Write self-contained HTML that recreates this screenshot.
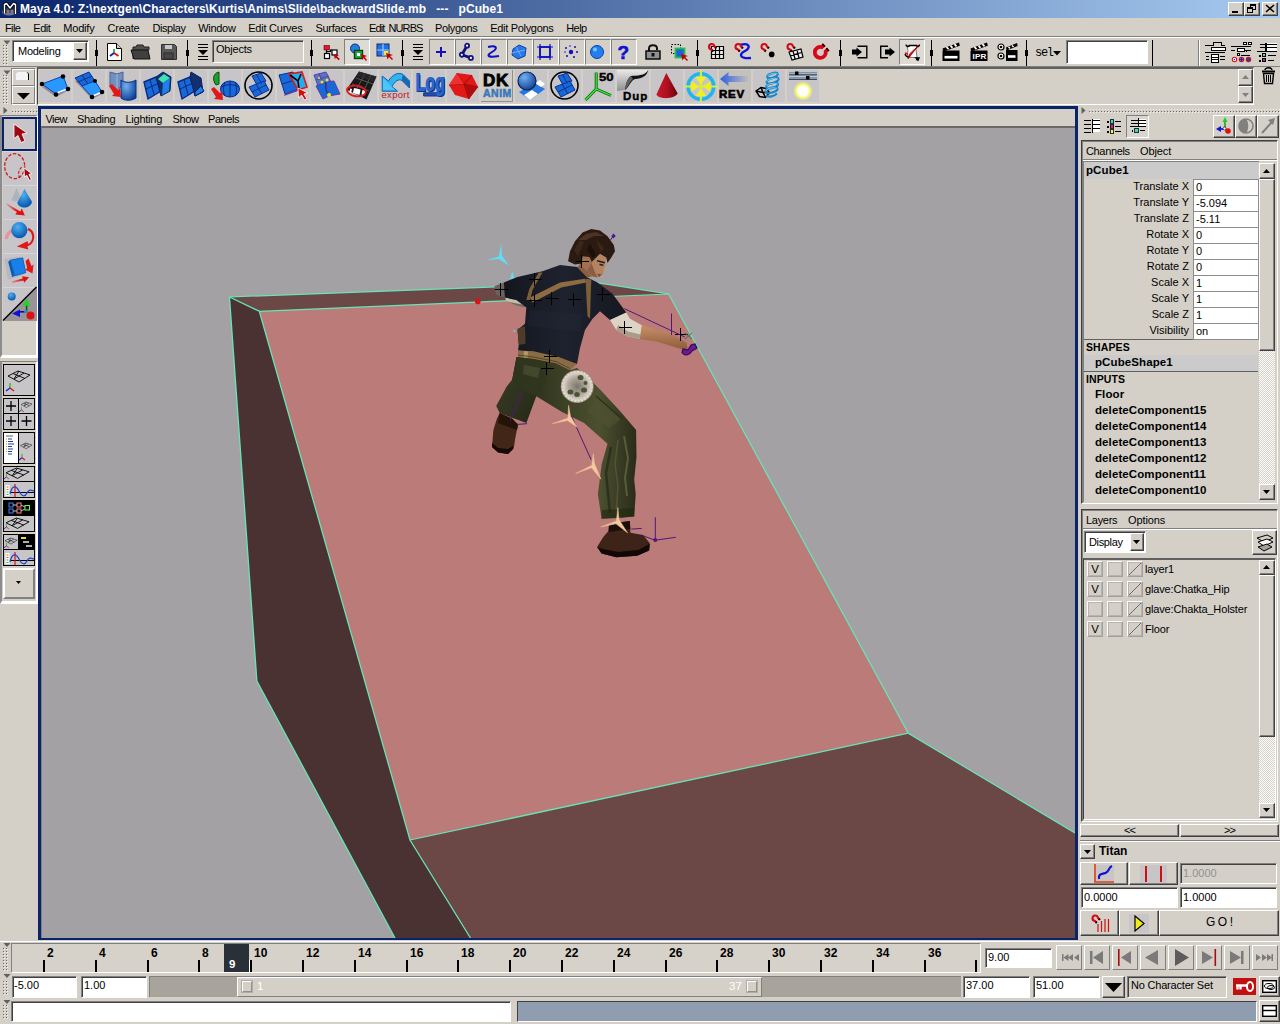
<!DOCTYPE html>
<html><head><meta charset="utf-8"><title>Maya 4.0</title>
<style>
*{box-sizing:border-box;margin:0;padding:0}
html,body{width:1280px;height:1024px;overflow:hidden;background:#d4d0c8;font-family:"Liberation Sans",sans-serif;font-size:11px;color:#000}
.a{position:absolute}
.t{position:absolute;white-space:nowrap;line-height:13px}
.tb{position:absolute;white-space:nowrap;line-height:13px;font-weight:bold}
.sunk{position:absolute;border:1px solid;border-color:#808080 #fff #fff #808080}
.sunk2{position:absolute;border:1px solid;border-color:#808080 #fff #fff #808080;box-shadow:inset 1px 1px 0 #404040,inset -1px -1px 0 #d4d0c8}
.rais{position:absolute;border:1px solid;border-color:#fff #808080 #808080 #fff}
.rais2{position:absolute;border:1px solid;border-color:#fff #404040 #404040 #fff;box-shadow:inset -1px -1px 0 #808080}
.btn{position:absolute;background:#d4d0c8;border:1px solid;border-color:#fff #404040 #404040 #fff;box-shadow:inset -1px -1px 0 #808080,inset 1px 1px 0 #d4d0c8}
.fld{position:absolute;background:#fff;border:1px solid;border-color:#808080 #fff #fff #808080;box-shadow:inset 1px 1px 0 #404040}
.hl{position:absolute;height:2px;border-top:1px solid #808080;border-bottom:1px solid #fff}
.vl{position:absolute;width:2px;border-left:1px solid #808080;border-right:1px solid #fff}
.dotsv{position:absolute;width:5px;background-image:radial-gradient(circle at 1px 1px,#6a6a6a .5px,transparent .85px);background-size:3px 3px}
svg{position:absolute;overflow:visible}
</style></head><body>
<!-- TITLE BAR -->
<div class="a" style="left:0;top:0;width:1280px;height:18px;background:linear-gradient(90deg,#0a246a,#a6caf0)"></div>
<svg style="left:1px;top:1px" width="18" height="16" viewBox="0 0 18 16">
 <ellipse cx="8" cy="11" rx="7" ry="3.5" fill="#8a8aa0" opacity=".8"/>
 <path d="M3.5 12.5V3.5L5.5 2.5L9 7L12.5 2.5L14.5 3.5V13" fill="none" stroke="#000" stroke-width="3.2" stroke-linejoin="round"/>
 <path d="M3.5 12.5V3.5L5.5 2.5L9 7L12.5 2.5L14.5 3.5V13" fill="none" stroke="#fff" stroke-width="1.4" stroke-linejoin="round"/>
 <path d="M7 12V8M11 12V8" stroke="#000" stroke-width="2.6"/><path d="M7 12V8.5M11 12V8.5" stroke="#fff" stroke-width="1"/>
</svg>
<div class="tb" id="ttl" style="left:20px;top:3px;color:#fff;font-size:12px;letter-spacing:0.05px">Maya 4.0: Z:\nextgen\Characters\Kurtis\Anims\Slide\backwardSlide.mb&nbsp;&nbsp; ---&nbsp;&nbsp; pCube1</div>
<!-- window buttons -->
<div class="btn" style="left:1228px;top:2px;width:16px;height:14px"></div>
<div class="a" style="left:1232px;top:11px;width:6px;height:2px;background:#000"></div>
<div class="btn" style="left:1244px;top:2px;width:16px;height:14px"></div>
<div class="a" style="left:1250px;top:4px;width:6px;height:6px;border:1px solid #000;border-top-width:2px"></div>
<div class="a" style="left:1247px;top:7px;width:6px;height:6px;border:1px solid #000;border-top-width:2px;background:#d4d0c8"></div>
<div class="btn" style="left:1262px;top:2px;width:16px;height:14px"></div>
<svg style="left:1266px;top:5px" width="8" height="7"><path d="M0 0L8 7M8 0L0 7" stroke="#000" stroke-width="1.6"/></svg>
<svg style="left:0;top:0" width="1280" height="1024"><defs><pattern id="dots" width="3" height="3" patternUnits="userSpaceOnUse"><rect width="1" height="1" fill="#686868"/><rect x="1" y="1" width="1" height="1" fill="#f4f2ee"/></pattern></defs><g fill="url(#dots)"><rect x="3" y="45" width="6" height="21"/><rect x="3" y="75" width="6" height="30"/><rect x="12" y="109" width="26" height="5"/><rect x="1089" y="109" width="191" height="5"/><rect x="3" y="948" width="6" height="24"/><rect x="3" y="981" width="6" height="15"/><rect x="3" y="1005" width="6" height="15"/></g></svg>
<!-- MENU BAR -->
<div class="t mi" style="left:5px;letter-spacing:-0.62px">File</div>
<div class="t mi" style="left:33.25px;letter-spacing:-0.43px">Edit</div>
<div class="t mi" style="left:63.25px;letter-spacing:-0.19px">Modify</div>
<div class="t mi" style="left:107.5px;letter-spacing:-0.17px">Create</div>
<div class="t mi" style="left:152.5px;letter-spacing:-0.44px">Display</div>
<div class="t mi" style="left:198.25px;letter-spacing:-0.31px">Window</div>
<div class="t mi" style="left:248.25px;letter-spacing:-0.24px">Edit Curves</div>
<div class="t mi" style="left:315.5px;letter-spacing:-0.3px">Surfaces</div>
<div class="t mi" style="left:369px;letter-spacing:-0.9px;word-spacing:2px">Edit NURBS</div>
<div class="t mi" style="left:435px;letter-spacing:-0.35px">Polygons</div>
<div class="t mi" style="left:490.25px;letter-spacing:-0.31px">Edit Polygons</div>
<div class="t mi" style="left:566.25px;letter-spacing:-0.59px">Help</div>
<style>.mi{top:22px;font-size:11px}</style>
<div class="hl" style="left:0;top:36px;width:1280px"></div>
<!-- STATUS LINE (row 1) -->
<svg style="left:3px;top:40px" width="9" height="66"><path d="M0.5 0.5h7l-3.5 4zM0.5 30.5h7l-3.5 4z" fill="#606060"/></svg>


<div class="fld" style="left:12px;top:40px;width:77px;height:22px"></div>
<div class="t" style="left:18px;top:45px;font-size:11px;letter-spacing:-.27px">Modeling</div>
<div class="btn" style="left:73px;top:42px;width:14px;height:18px"></div>
<svg style="left:76px;top:49px" width="8" height="4"><path d="M0 0h7l-3.5 4z"/></svg>
<style>.sep{position:absolute;top:40px;width:1px;height:26px;background:#000}.sep:after{content:"";position:absolute;left:-1px;top:10px;width:3px;height:6px;background:#000}</style>
<div class="sep" style="left:96px"></div>
<!-- new scene -->
<svg style="left:107px;top:43px" width="15" height="18" viewBox="0 0 15 18"><path d="M.5.5h9l5 5v12h-14z" fill="#fff" stroke="#000"/><path d="M9.5.5v5h5" fill="#ccc" stroke="#000"/><path d="M7 10V6" stroke="#18a030" stroke-width="1.6"/><path d="M7 10l-4 3" stroke="#1020d0" stroke-width="1.8"/><path d="M7 10l4.5 3" stroke="#e01010" stroke-width="1.8"/></svg>
<!-- folder -->
<svg style="left:130px;top:44px" width="21" height="16" viewBox="0 0 21 16"><path d="M3 15V3h3l1-2h6l1 2h5v3" fill="#505050" stroke="#202020"/><path d="M1 6h17l2 9H4z" fill="#404040" stroke="#101010"/></svg>
<!-- save -->
<svg style="left:160px;top:44px" width="17" height="16" viewBox="0 0 17 16"><path d="M1.5.5h13l2 2v13h-15z" fill="#585858" stroke="#303030"/><rect x="5" y="1" width="7" height="4" fill="#c8c8c8"/><rect x="4" y="9" width="9" height="6" fill="#484848" stroke="#2a2a2a"/></svg>
<div class="sep" style="left:187px"></div>
<svg style="left:197px;top:44px" width="12" height="16" viewBox="0 0 12 16"><path d="M1 .5h10M1 3.500h10M1 12.500h10M1 15.500h10" stroke="#000"/><path d="M1 6h10l-5 5z"/></svg>
<div class="sunk2" style="left:212px;top:40px;width:92px;height:23px;background:#d4d0c8"></div>
<div class="t" style="left:216px;top:43px;font-size:11px;letter-spacing:-.2px">Objects</div>
<div class="sep" style="left:311px"></div>
<!-- select by hierarchy -->
<svg style="left:322px;top:43px" width="18" height="18" viewBox="0 0 18 18"><path d="M4.500 7v4M4.500 8.500h4v-1.500h2" fill="none" stroke="#000" stroke-width="1.200"/><rect x="2" y="2.500" width="5.500" height="4.500" fill="#e01830" stroke="#600010" stroke-width=".6"/><rect x="2.500" y="10.500" width="5" height="5" fill="#fff" stroke="#000" stroke-width="1.200"/><rect x="10" y="7" width="5" height="5" fill="#fff" stroke="#000" stroke-width="1.200"/><path d="M11.500 11l5.500 1.500-2 .8 2.800 2.800-1.200 1.200-2.800-2.800-.8 2z" fill="#c00010"/></svg>
<!-- select by object (pressed) -->
<div class="a" style="left:344px;top:39px;width:26px;height:26px;background:#dedbd5;border:1px solid;border-color:#808080 #fff #fff #808080"></div>
<svg style="left:349px;top:43px" width="19" height="19" viewBox="0 0 19 19"><circle cx="6" cy="5.500" r="4.500" fill="#2080e0" stroke="#103070"/><rect x="5.500" y="7.500" width="8" height="8" fill="#20b040" stroke="#064010" stroke-width="1.400"/><rect x="8" y="10" width="3" height="3" fill="#fff"/><path d="M12 11l6 2-2.500 1 2.500 3-1 1-2.500-3-1.500 2z" fill="#c00000"/></svg>
<!-- component -->
<svg style="left:376px;top:43px" width="18" height="18" viewBox="0 0 18 18"><rect x="1" y="1" width="12" height="12" fill="#2070e0" stroke="#0a2a80"/><path d="M7 1v12M1 7h12" stroke="#a0c8ff" stroke-width="1.200"/><rect x="8" y="8" width="4.500" height="4.500" fill="#f0e840"/><path d="M10 10l7 2-3 1 3 3-1 1-3-3-1.500 2.500z" fill="#c00000"/></svg>
<div class="sep" style="left:402px"></div>
<svg style="left:412px;top:44px" width="12" height="16" viewBox="0 0 12 16"><path d="M1 .5h10M1 3.500h10M1 12.500h10M1 15.500h10" stroke="#000"/><path d="M1 6h10l-5 5z"/></svg>
<style>.mb{position:absolute;top:39px;width:26px;height:26px;border:1px solid;border-color:#808080 #fff #fff #808080}</style>
<div class="mb" style="left:429px"></div><div class="mb" style="left:455px"></div><div class="mb" style="left:481px"></div><div class="mb" style="left:507px"></div><div class="mb" style="left:533px"></div><div class="mb" style="left:559px"></div><div class="mb" style="left:585px"></div><div class="mb" style="left:611px"></div>
<svg style="left:429px;top:39px" width="210" height="26" viewBox="0 0 210 26">
 <path d="M7 13h10M12 8v10" stroke="#1010c0" stroke-width="2"/>
 <g transform="translate(26,0)"><path d="M12.100 6.700L6.800 15.750L15.900 18.900" fill="none" stroke="#101080" stroke-width="2.800" stroke-linejoin="round"/><circle cx="12.100" cy="6.700" r="2" fill="#fff" stroke="#101080" stroke-width="1.800"/><circle cx="6.800" cy="15.750" r="2" fill="#fff" stroke="#101080" stroke-width="1.800"/><circle cx="15.900" cy="18.900" r="2" fill="#fff" stroke="#101080" stroke-width="1.800"/></g>
 <g transform="translate(52,0)"><path d="M7 8c8-2 11 1 4 5s-3 6 7 4" fill="none" stroke="#1010c0" stroke-width="2"/></g>
 <g transform="translate(78,0)"><path d="M6 10l6-4 7 3-1 8-7 3-6-4z" fill="#2878e8" stroke="#1040a0"/><path d="M9 8l5 9M5 14l13-3" stroke="#80b8ff" stroke-width=".8"/></g>
 <g transform="translate(104,0)"><rect x="7" y="8" width="10" height="10" fill="none" stroke="#1010c0" stroke-width="1.800"/><path d="M4 8h16M4 18h16M7 5v16M17 5v16" stroke="#1010c0" stroke-width="1.200"/></g>
 <g transform="translate(130,0)" fill="#1010c0"><circle cx="12" cy="13" r="2.200"/><circle cx="7" cy="9" r="1"/><circle cx="16" cy="8" r="1"/><circle cx="18" cy="13" r="1"/><circle cx="8" cy="17" r="1"/><circle cx="15" cy="18" r="1"/><circle cx="11" cy="7" r=".8"/><circle cx="6" cy="13" r=".8"/></g>
 <g transform="translate(156,0)"><circle cx="12" cy="13" r="6.500" fill="#2080f0" stroke="#0840a0"/><circle cx="10" cy="10.500" r="2" fill="#80c0ff"/></g>
</svg>
<div class="tb" style="left:617.500px;top:43px;font-size:19px;line-height:19px;color:#1010d0;-webkit-text-stroke:.6px #1010d0">?</div>
<!-- lock -->
<svg style="left:645px;top:43px" width="16" height="17" viewBox="0 0 16 17"><path d="M4 8V5.500c0-4.500 8-4.500 8 0V7" fill="none" stroke="#101010" stroke-width="2"/><rect x="1" y="8" width="14" height="8" fill="#909090" stroke="#000" stroke-width="1.400"/><rect x="6.500" y="10" width="3" height="3.500" fill="#101010"/></svg>
<!-- highlight select -->
<svg style="left:670px;top:43px" width="19" height="19" viewBox="0 0 19 19"><rect x="1.500" y="1.500" width="9" height="9" fill="none" stroke="#000" stroke-dasharray="1.500 1.500"/><rect x="5.500" y="5.500" width="9" height="9" fill="#2060e0" stroke="#20c040" stroke-width="1.800"/><path d="M11 11l7 2-3 1 3 3-1 1-3-3-1.500 2.500z" fill="#c00000"/></svg>
<div class="sep" style="left:697px"></div>
<!-- snaps -->
<svg style="left:704px;top:40px" width="130" height="24" viewBox="0 0 130 24">
 <defs><g id="mag"><path d="M8.560 5.430L6.860 3.730A2.700 2.700 0 1 0 3.730 6.860L5.430 8.560" fill="none" stroke="#d80818" stroke-width="2.100" stroke-linejoin="round"/><path d="M9 5.870l-1.200-1.200M5.870 9l-1.200-1.200" stroke="#200000" stroke-width="2.100"/></g></defs>
 <g><path d="M7.500 6.500h12v12h-12zM11.500 6.500v12M15.500 6.500v12M7.500 10.500h12M7.500 14.500h12" fill="#ececec" stroke="#000" stroke-width="1.200"/><use href="#mag" x="3.500" y="2.500"/></g>
 <g transform="translate(27,0)"><path d="M9 5c10-3 11 3 5 6s-6 8 6 7" fill="none" stroke="#1010e0" stroke-width="2.400"/><use href="#mag" x="3" y="2.500"/></g>
 <g transform="translate(53,0)"><use href="#mag" x="3" y="2.500"/><circle cx="14.700" cy="14.400" r="2.800"/></g>
 <g transform="translate(80,0)"><path d="M5 12l12-3 2 8-11 3zM9 11l2 8M13 10l2 8M6 15.500l12-3" fill="#ececec" stroke="#000" stroke-width="1.200"/><use href="#mag" x="2" y="2.500"/></g>
 <g transform="translate(108,0)"><path d="M11.900 5.100L9.720 7.090A5.500 5.500 0 1 0 13.720 11.440L15.900 9.400" fill="none" stroke="#d80818" stroke-width="3.800"/><path d="M12.300 4.700l-1.300 1.200M16.300 9l-1.300 1.200" stroke="#200000" stroke-width="3.800"/></g>
</svg>
<div class="sep" style="left:840px"></div>
<svg style="left:852px;top:45px" width="16" height="14" viewBox="0 0 16 14"><path d="M5.500 1.200h9.300v11.600H5.500" fill="none" stroke="#000" stroke-width="1.400"/><path d="M0 4.500h4.500V2.500L10 7l-5.500 4.500V9.500H0z"/></svg>
<svg style="left:879px;top:45px" width="17" height="14" viewBox="0 0 17 14"><path d="M9 1.200H1.700v11.600H9" fill="none" stroke="#000" stroke-width="1.400"/><path d="M6 4.500h4.500V2.500L16 7l-5.500 4.500V9.500H6z"/></svg>
<div class="a" style="left:899px;top:39px;width:26px;height:26px;background:#dedbd5;border:1px solid;border-color:#808080 #fff #fff #808080"></div>
<svg style="left:903px;top:42px" width="19" height="20" viewBox="0 0 19 20"><path d="M4 3.500h11l-2 4 1 8H4l1-7z" fill="#fff" stroke="#606060" stroke-width=".8"/><path d="M3 2.500c0 2.500 3 2.500 3.500 1h7c.5 1.500 3 1.500 3-1" fill="none" stroke="#000" stroke-width="1.400"/><path d="M2 12c1 3 3 3 5 2M13 16l2 2 1-2z" fill="none" stroke="#000" stroke-width="1.400"/><circle cx="14.500" cy="17" r="1.600"/><path d="M16 3L8 13l-3 4 1.500-5z" fill="#e01010" stroke="#a00000" stroke-width=".8"/><path d="M2 11l3 1" stroke="#e01010" stroke-width="1.600"/></svg>
<div class="sep" style="left:931px"></div>
<!-- clappers -->
<svg style="left:942px;top:41px" width="76" height="21" viewBox="0 0 76 21">
 <g id="clp"><path d="M.5 7.500L17 1.500l.8 3.200L1.500 10.500z" fill="#000"/><path d="M4.500 6l2 2.200M8.500 4.600l2 2.200M12.500 3.200l2 2.200" stroke="#fff" stroke-width="1.800"/><rect x=".5" y="9.500" width="17" height="10.500" fill="#000"/></g>
 <path d="M2.500 16.200h13" stroke="#fff" stroke-width="2.600"/>
 <use href="#clp" x="28"/>
 <g transform="translate(55,0)"><circle cx="4" cy="6" r="3" fill="#fff" stroke="#000" stroke-width="1.200"/><circle cx="4" cy="6" r="1.300"/><circle cx="4" cy="15" r="3" fill="#fff" stroke="#000" stroke-width="1.200"/><circle cx="4" cy="15" r="1.300"/><path d="M9 6.500l11-4.500.7 3L9.500 9.500z"/><path d="M11.500 5.800l1.500 1.600M15 4.500l1.500 1.600" stroke="#fff" stroke-width="1.400"/><rect x="9" y="9" width="11.500" height="11"/><path d="M11 15.500h7.500" stroke="#fff" stroke-width="2.600"/></g>
</svg>
<div class="t" style="left:972.500px;top:53px;font-size:8px;line-height:8px;font-weight:bold;color:#fff;letter-spacing:.2px">IPR</div>
<div class="sep" style="left:1026px"></div>
<div class="t" style="left:1035px;top:47px;font-family:'Liberation Mono',monospace;font-size:12px;letter-spacing:-1.300px">sel</div>
<svg style="left:1053px;top:51px" width="9" height="5"><path d="M0 0h8l-4 4.500z"/></svg>
<div class="fld" style="left:1066px;top:40px;width:82px;height:24px"></div>
<div class="a" style="left:1152px;top:40px;width:1px;height:26px;background:#000"></div>
<div class="vl" style="left:1198px;top:40px;height:26px"></div>
<!-- right icons -->
<svg style="left:1205px;top:41px" width="74" height="22" viewBox="0 0 74 22" shape-rendering="crispEdges">
 <g stroke="#000" fill="none"><path d="M0 4.500h8l1-3h7l1 3h3M0 11.500h20M1 15.500h3M1 18.500h3M14.500 15.500h5.500M14.500 18.500h5.500"/><rect x="6.500" y="6.500" width="13.500" height="3" fill="#fff"/><rect x="6.500" y="13.500" width="6.500" height="7.500" fill="#fff"/><path d="M6.500 16.500h6.500M6.500 18.500h6.500" /></g>
 <g transform="translate(26,0)" stroke="#000" fill="none"><rect x="12.500" y="1.500" width="3" height="2" fill="#fff"/><rect x="17.500" y="1.500" width="3" height="2" fill="#fff"/><path d="M0 5.500h20M0 9.500h4M14 9.500h6M15 8.500v2M6 14.500h2M10 14.500h9"/><rect x="6.500" y="7.500" width="6.500" height="3" fill="#fff"/><rect x="6.500" y="12.500" width="2" height="2" fill="#fff"/></g>
 <g transform="translate(26,0)" shape-rendering="geometricPrecision"><circle cx="3.500" cy="18.500" r="2.200" fill="#fff" stroke="#d01010" stroke-width="1.100"/><circle cx="3.500" cy="18.500" r=".7" fill="#2020c0"/><circle cx="10.500" cy="18.500" r="2.200" fill="#8080e0" stroke="#d01010" stroke-width="1.100"/><path d="M10.500 16.500v4M8.500 18.500h4" stroke="#2020c0" stroke-width="1"/><circle cx="17.500" cy="18.500" r="2.200" fill="#2838c0" stroke="#d01010" stroke-width="1.100"/></g>
 <g transform="translate(52,0)" stroke="#000" fill="none"><rect x="10" y="1.500" width="10" height="8.500" fill="#fff" stroke="none"/><path d="M3 3.500h5M3 6.500h5M10 3.500h10M10 6.500h10M0 10.500h20M10.500 14.500h8.500M10.500 19.500h6.500"/><path d="M9 1.500v9" stroke-width="1.400"/><rect x="2" y="14" width="1.500" height="1.500" fill="#000" stroke="none"/><rect x="2" y="19" width="1.500" height="1.500" fill="#000" stroke="none"/><rect x="5.500" y="12.500" width="3" height="3" fill="#40e0c0"/><rect x="5.500" y="17.500" width="3" height="3" fill="#a030b0"/></g>
</svg>
<div class="hl" style="left:0;top:66px;width:1280px;border-bottom-color:#d4d0c8"></div>
<!-- SHELF -->
<div class="a" style="left:11px;top:68px;width:25px;height:37px;border:1px solid;border-color:#808080 #fff #fff #808080"></div>
<div class="a" style="left:12px;top:69px;width:23px;height:17px;border:1px solid;border-color:#fff #808080 #808080 #fff"></div>
<div class="a" style="left:16px;top:72px;width:13px;height:8px;background:#f4f4f4;border-radius:3px 3px 0 0;border-right:1px solid #000"></div>
<div class="a" style="left:12px;top:86px;width:23px;height:18px;border:1px solid;border-color:#fff #808080 #808080 #fff"></div>
<svg style="left:17px;top:93px" width="13" height="7"><path d="M0 0h13l-6.500 6.500z"/></svg>
<div class="a" style="left:37px;top:67px;width:1217px;height:38px;border:1px solid;border-color:#404040 #fff #fff #404040;border-top:2px solid #606060"></div>
<svg style="left:39px;top:70px" width="782" height="32" viewBox="0 0 782 32">
<defs>
<linearGradient id="gb" x1="0" y1="0" x2="1" y2="1"><stop offset="0" stop-color="#38a0ff"/><stop offset="1" stop-color="#1060d0"/></linearGradient>
<radialGradient id="gsph" cx=".35" cy=".3" r=".8"><stop offset="0" stop-color="#70b0f0"/><stop offset="1" stop-color="#0a3a90"/></radialGradient>
<radialGradient id="glt" cx=".5" cy=".5" r=".5"><stop offset="0" stop-color="#fff"/><stop offset=".45" stop-color="#fff"/><stop offset=".7" stop-color="#f8f870"/><stop offset="1" stop-color="#f0f060" stop-opacity="0"/></radialGradient>
<linearGradient id="grev" x1="0" y1="0" x2="1" y2="0"><stop offset="0" stop-color="#3060e0"/><stop offset="1" stop-color="#3060e0" stop-opacity="0"/></linearGradient>
<linearGradient id="gcone" x1="0" y1="0" x2="1" y2="0"><stop offset="0" stop-color="#c81828"/><stop offset=".5" stop-color="#b01020"/><stop offset="1" stop-color="#680010"/></linearGradient>
<linearGradient id="gdup" x1="0" y1="0" x2="0" y2="1"><stop offset="0" stop-color="#e8e8e8"/><stop offset="1" stop-color="#909090"/></linearGradient>
</defs>
<g id="bgs" fill="#c8c5c8">
<rect x="0" width="32" height="32"/><rect x="34" width="32" height="32"/><rect x="68" width="32" height="32"/><rect x="102" width="32" height="32"/><rect x="136" width="32" height="32"/><rect x="170" width="32" height="32"/><rect x="204" width="32" height="32"/><rect x="238" width="32" height="32"/><rect x="272" width="32" height="32"/><rect x="306" width="32" height="32"/><rect x="340" width="32" height="32"/><rect x="374" width="32" height="32"/><rect x="408" width="32" height="32"/><rect x="442" width="32" height="32"/><rect x="476" width="32" height="32"/><rect x="510" width="32" height="32"/><rect x="544" width="32" height="32"/><rect x="578" width="32" height="32"/><rect x="612" width="32" height="32"/><rect x="646" width="32" height="32"/><rect x="680" width="32" height="32"/><rect x="714" width="32" height="32"/><rect x="748" width="32" height="32"/>
</g>
<!-- 1 create polygon -->
<g><path d="M4 15l20-8 5 12-11 6z" fill="#505060" opacity=".5" transform="translate(-1,2)"/><path d="M3 14l21-8 5 13-12 5z" fill="#2898ff" stroke="#1040b0"/><path d="M18 23l10-4" stroke="#fff" stroke-width="1.600"/><circle cx="3" cy="14" r="2.300"/><circle cx="24" cy="6.500" r="2.300"/><circle cx="29" cy="19" r="2.300"/><circle cx="17" cy="24.500" r="2.300"/></g>
<!-- 2 append polygon -->
<g transform="translate(34,0)"><path d="M3 9l14-6 13 19-10 5z" fill="#505060" opacity=".5" transform="translate(-1,2)"/><path d="M2 8l14-6 6 9-13 5z" fill="#1868d8" stroke="#0a3090"/><path d="M9 5l6 9M5 12l14-6" stroke="#0a3090"/><path d="M9 16l13-5 7 11-10 5z" fill="#2898ff" stroke="#1040b0"/><path d="M20 26l9-4" stroke="#fff" stroke-width="1.600"/><circle cx="22" cy="11" r="2"/><circle cx="19" cy="27" r="2.300"/><circle cx="29" cy="22" r="2.300"/></g>
<!-- 3 -->
<g transform="translate(68,0)"><path d="M3 2l7 2 6-2v14l-6 3-7-3z" fill="#7090c0" stroke="#506090"/><path d="M10 4v15" stroke="#a0b8e0"/><path d="M14 10c4 3 10 3 15 0v18c-5 3-11 3-15 0z" fill="url(#gsph)" stroke="#0a3080"/><path d="M2 16l3-2 6 6 2-2 1 9-9-1 2-2z" fill="#e01818"/></g>
<!-- 4 extrude face -->
<g transform="translate(102,0)"><path d="M3 12l12-5 5 14-13 8z" fill="#1868d8" stroke="#0a2a80" stroke-width="1.400"/><path d="M9 9.500l4 15M5 19l13-6" stroke="#0a2a80"/><path d="M15 7l7-5 8 5-1 14-9 5z" fill="#103070" stroke="#0a2060"/><path d="M17 9l6-5 6 4-7 5z" fill="#40e0b0"/><path d="M22 13l7-5-1 13-7 4z" fill="#2080e8"/></g>
<!-- 5 extrude edge -->
<g transform="translate(136,0)"><path d="M3 12l12-5 5 14-13 8z" fill="#1868d8" stroke="#0a2a80" stroke-width="1.400"/><path d="M9 9.500l4 15M5 19l13-6" stroke="#0a2a80"/><path d="M15 7l1-5 10 6 2 14-8 4z" fill="#103070" stroke="#0a2060"/><path d="M20 22l6-6 3 5-9 5z" fill="#2080e8" stroke="#0a2060"/></g>
<!-- 6 -->
<g transform="translate(170,0)"><path d="M10 2c-6 1-7 8-3 13l3-1z" fill="#18a028" stroke="#0a5010"/><ellipse cx="21" cy="19" rx="9.500" ry="8" fill="#1868d8" stroke="#0a2a80"/><path d="M12 17c6-3 12-3 18 0M21 11v16M16 12c-2 5-2 10 0 14M26 12c2 5 2 10 0 14" fill="none" stroke="#0a2a80"/><path d="M2 19l3-2 6 6 2-2 1 9-9-1 2-2z" fill="#e01818"/></g>
<!-- 7 circle poly -->
<g transform="translate(204,0)"><circle cx="15.500" cy="15.500" r="13.500" fill="none" stroke="#000" stroke-width="1.600"/><path d="M9 6l9-3 5 8-9 4z" fill="#1868d8" stroke="#0a3090"/><path d="M6 17l15-6 5 9-14 7z" fill="#1868d8" stroke="#0a3090"/><path d="M13.500 4.500l5 9M13 14l6 10M9 22l14-7" stroke="#0a3090"/></g>
<!-- 8 split polygon -->
<g transform="translate(238,0)"><path d="M2 5l14-3 6 17-14 5z" fill="#1868d8" stroke="#0a3090"/><path d="M5 14l13-4" stroke="#0a3090"/><path d="M8 24l-1 2 14-5 1-2z" fill="#6040a0"/><path d="M12 4l13-2 5 15-9 3z" fill="#20b0f0" stroke="#e01818" stroke-width="1.600"/><path d="M13 5l8 6 3-7M21 11l1 8" fill="none" stroke="#000" stroke-width="1.600"/><path d="M21 18l10 5-4 1 3 5-2.500 1-3-5-3 3z" fill="#d01010" stroke="#fff" stroke-width=".8"/></g>
<!-- 9 merge verts -->
<g transform="translate(272,0)"><path d="M3 5l12-3 5 10-13 4z" fill="#5078c8" stroke="#6040a0"/><path d="M8 3.500l5 11M5 10l13-4" stroke="#6040a0"/><path d="M5 16l10-4 3 14-6 3z" fill="#1868d8" stroke="#6040a0"/><path d="M15 12l8-1 6 13-11 2z" fill="#1868d8" stroke="#6040a0"/><path d="M15 12c-1 6 0 10 3 14" fill="none" stroke="#0a3090"/><circle cx="11" cy="12" r="1.500" fill="#f0e020"/><circle cx="16" cy="10" r="1.500" fill="#f0e020"/><circle cx="18" cy="25" r="2" fill="#f0e020"/><circle cx="8" cy="8" r="1" fill="#f0e020"/></g>
<!-- 10 -->
<g transform="translate(306,0)"><path d="M14 1.500L31.500 6.500L21.500 29.500L1.500 19.500z" fill="#181818"/><path d="M11 8l17 6M7 14l17 7M20 3.500L9 24M26 5L16 27" stroke="#585858"/><path d="M14 1.500L31.500 6.500L29 12L11 6z" fill="#303030" opacity=".6"/><path d="M9 18l6.500 1.500-1 5.500-6.500-2z" fill="#fff"/><path d="M17.500 20l3 1-1 4.500-3-1z" fill="#fff"/><path d="M5 18.500l2 .5-1 4-1.500-.5z" fill="#fff"/><ellipse cx="11.400" cy="21" rx="9.500" ry="5.300" fill="none" stroke="#e01818" stroke-width="1.800" transform="rotate(8 11.400 21)"/></g>
<!-- 11 export -->
<g transform="translate(340,0)"><path d="M3.200 6L3.200 21.200L18.500 21.200L13 16.500C16 11 20 8.500 23 10.500L30.500 18L30.500 11L24 4.500C19 1.500 13 5 9.500 11z" fill="#30b4f0" stroke="#1060b0" stroke-width="1"/><path d="M23 10.500L30.500 18V11L24 4.500c-1 2-1 4-1 6z" fill="#1868b8"/><path d="M4 8l0 12 12 0z" fill="#60d0ff" opacity=".6"/></g>
<!-- 12 log -->
<g transform="translate(374,0)"><path d="M10.700 22.800h18.100v3.200H10.700z" fill="#2050b0" stroke="#103080"/></g>
<!-- 13 red poly -->
<g transform="translate(408,0)"><path d="M10 3l15 2 6 12-9 12-14-4-6-10z" fill="#e01818"/><path d="M10 3l7 11 8-9M17 14l-15 1M17 14l5 15M17 14l14 3" stroke="#a00808" fill="none"/><path d="M10 3l7 11-15 1z" fill="#f03030"/><path d="M17 14l5 15 9-12z" fill="#b00c0c"/></g>
<!-- 14 DK anim -->
<g transform="translate(442,0)"><rect width="32" height="32" fill="#d0ccc8"/><path d="M0 31.500h32M31.500 0v32" stroke="#909090"/></g>
<!-- 15 sphere/plane -->
<g transform="translate(476,0)"><path d="M4 22l16-9 10 6-15 11z" fill="#2878e0"/><path d="M9 25l8-5 6 4-8 6z" fill="#fff"/><path d="M20 13l5-3 5 4-4 3z" fill="#fff"/><circle cx="12" cy="11" r="9" fill="url(#gsph)" stroke="#0a2050" stroke-width="1.200"/></g>
<!-- 16 circle poly -->
<g transform="translate(510,0)"><circle cx="15.500" cy="15.500" r="13.500" fill="none" stroke="#000" stroke-width="1.600"/><path d="M9 6l9-3 5 8-9 4z" fill="#1868d8" stroke="#0a3090"/><path d="M6 17l15-6 5 9-14 7z" fill="#1868d8" stroke="#0a3090"/><path d="M13.500 4.500l5 9M13 14l6 10M9 22l14-7" stroke="#0a3090"/></g>
<!-- 17 axes 50 -->
<g transform="translate(544,0)"><path d="M13.200 2.500V19L2.500 30M13.200 19L28 25.500" fill="none" stroke="#0a700a" stroke-width="3"/><path d="M13.200 2.500V19L2.500 30M13.200 19L28 25.500" fill="none" stroke="#40f040" stroke-width="1.100"/></g>
<!-- 18 Dup -->
<g transform="translate(578,0)"><path d="M0 0h31c-1 6-6 8.500-13 9-4 1-6 8-10 11L0 21z" fill="url(#gdup)"/><path d="M31 0c-.5 6-6 8.500-13 9-4 1-6 8-10 11 1-8 3-12 6-14 6-.5 14 0 17-6z" fill="#101010"/><path d="M14 6c-3 2-5 6-6 14 3-3 5-9 8-11z" fill="#606060"/></g>
<!-- 19 cone -->
<g transform="translate(612,0)"><path d="M15.300 3L5.400 24.500c2 5 18 5 21.300-1z" fill="url(#gcone)"/></g>
<!-- 20 target -->
<g transform="translate(646,0)"><circle cx="15.900" cy="16.500" r="12.800" fill="none" stroke="#20b4f0" stroke-width="3.600"/><path d="M15.900 0v32M0 16.500h32" stroke="#d8f030" stroke-width="2"/><path d="M15.900 14.500l-5.500-7.500h11zM15.900 18.500l-5.500 7.500h11zM13.900 16.500l-7.500-5.500v11zM17.900 16.500l7.500-5.500v11z" fill="#f0f020"/></g>
<!-- 21 REV -->
<g transform="translate(680,0)"><rect width="32" height="32" fill="#c4c0bc"/><path d="M1 9l8.500-7v4h20.500v6H9.500v4z" fill="url(#grev)"/></g>
<!-- 22 spring -->
<g transform="translate(714,0)"><path d="M3 21l5-3.500 5 1 3.500 4-4 5-6-1zM8 17.500l2 5 6.500 0M10 22.500l2.500 5M3 21l7 1.500" fill="none" stroke="#000" stroke-width="1.500"/><g fill="none" stroke="#1c88c8" stroke-width="2.200"><ellipse cx="19.500" cy="5.500" rx="5.500" ry="2.200" transform="rotate(-18 19.500 5.500)"/><ellipse cx="19.500" cy="10.600" rx="6.200" ry="2.500" transform="rotate(-18 19.500 10.600)"/><ellipse cx="19" cy="15.700" rx="6.200" ry="2.500" transform="rotate(-18 19 15.700)"/><ellipse cx="18.500" cy="20.200" rx="6.200" ry="2.500" transform="rotate(-18 18.500 20.200)"/><path d="M13 25.500c3 2 8 1 11-2"/></g><g fill="none" stroke="#88dcff" stroke-width=".8"><path d="M14.500 6c2-2.500 7-3.500 10-2M13.500 11.500c2-3 8-4 11.500-2.500M13 16.500c2-3 8-4 11.500-2.500M12.500 21c2-3 8-4 11.500-2.500"/></g></g>
<!-- 23 light -->
<g transform="translate(748,0)"><path d="M2 4h28M2 8.500h28" stroke="#404850" stroke-width="3"/><path d="M2 3.500h28M2 8h28" stroke="#90b8d8" stroke-width="1.400"/><rect x="8" y="1.500" width="3.500" height="3.500"/><rect x="19" y="6" width="3.500" height="3.500"/><circle cx="16" cy="21" r="10" fill="url(#glt)"/></g>
</svg>
<div class="t" style="left:381.500px;top:88.500px;font-size:9.500px;line-height:11px;color:#c01818;letter-spacing:.3px">export</div>
<div class="tb" style="left:416px;top:70px;font-size:25px;line-height:26px;color:#2868d0;-webkit-text-stroke:2.200px #2458c0;paint-order:stroke fill;transform:scale(.62,.95);transform-origin:0 0;letter-spacing:.5px;text-shadow:1.500px 1.500px 0 #103080">Log</div>
<div class="tb" style="left:483px;top:71.500px;font-size:17px;line-height:17px;letter-spacing:.8px;font-weight:bold;-webkit-text-stroke:.9px #000">DK</div>
<div class="tb" style="left:483px;top:88px;font-size:10.500px;line-height:11px;color:#3878b8;letter-spacing:.5px;-webkit-text-stroke:.5px #3878b8">ANIM</div>
<div class="tb" style="left:599px;top:72px;font-size:10.500px;line-height:11px;transform:scaleX(1.250);transform-origin:0 0;-webkit-text-stroke:.4px #000">50</div>
<div class="tb" style="left:623px;top:89.500px;font-size:11.500px;line-height:13px;letter-spacing:1px;-webkit-text-stroke:.4px #000">Dup</div>
<div class="tb" style="left:719px;top:87.500px;font-size:11.500px;line-height:13px;letter-spacing:.7px;-webkit-text-stroke:.7px #000">REV</div>
<!-- shelf scroll + trash -->
<div class="btn" style="left:1238px;top:69px;width:15px;height:17px"></div>
<div class="btn" style="left:1238px;top:86px;width:15px;height:17px"></div>
<svg style="left:1242px;top:75px" width="8" height="24"><path d="M0 4h7l-3.500-4zM0 18h7l-3.500 4z" fill="#808080"/></svg>
<svg style="left:1261px;top:67px" width="15" height="18" viewBox="0 0 15 18"><path d="M4 3c0-3 7-3 7 0" fill="none" stroke="#000" stroke-width="1.400"/><path d="M1 3.500h13v2H1z" fill="#000"/><path d="M2.500 6.500h10l-1 10h-8z" fill="#d4d0c8" stroke="#000" stroke-width="1.400"/><path d="M5.500 8v7M7.500 8v7M9.500 8v7" stroke="#000"/></svg>
<!-- TOOLBOX -->
<svg style="left:3px;top:107px" width="8" height="8"><path d="M.5 0v7l4-3.500z" fill="#606060"/></svg>

<div class="a" style="left:0;top:115px;width:38px;height:243px;border-left:2px solid #8c8c8c;border-right:2px solid #fff;border-bottom:3px solid #fff;border-top:1px solid #808080"></div><div class="a" style="left:0;top:361px;width:38px;height:243px;border-left:2px solid #8c8c8c;border-right:2px solid #fff;border-bottom:3px solid #fff;border-top:1px solid #808080"></div>
<div class="a" style="left:3px;top:117px;width:34px;height:204px;background:#c8c5c8"></div>
<div class="a" style="left:3px;top:151px;width:34px;height:1px;background:#d8d5d8"></div><div class="a" style="left:3px;top:185px;width:34px;height:1px;background:#d8d5d8"></div><div class="a" style="left:3px;top:219px;width:34px;height:1px;background:#d8d5d8"></div><div class="a" style="left:3px;top:253px;width:34px;height:1px;background:#d8d5d8"></div><div class="a" style="left:3px;top:287px;width:34px;height:1px;background:#d8d5d8"></div>
<div class="a" style="left:2px;top:117px;width:35px;height:34px;border:2px solid #0a246a"></div>
<svg style="left:3px;top:117px" width="34" height="204" viewBox="0 0 34 204">
<defs><radialGradient id="tsph" cx=".4" cy=".3" r=".7"><stop offset="0" stop-color="#50b0f0"/><stop offset="1" stop-color="#0858b0"/></radialGradient>
<linearGradient id="tarr" x1="0" y1="0" x2="1" y2="0"><stop offset="0" stop-color="#f04040" stop-opacity=".35"/><stop offset=".6" stop-color="#e01010"/><stop offset="1" stop-color="#e01010"/></linearGradient></defs>
<!-- select arrow -->
<path d="M11 7l13 9-5 1 3 7-4 1.500-3-7-4 3z" fill="#a00810" stroke="#fff" stroke-width=".8"/>
<!-- lasso -->
<ellipse cx="11.700" cy="49.200" rx="10" ry="12.500" fill="none" stroke="#d01820" stroke-width="1.300" stroke-dasharray="3.500 1.600"/>
<path d="M17 61c-3-4-1-9 3-12" fill="none" stroke="#d01820" stroke-width="1.200" stroke-dasharray="3 1.500"/>
<path d="M20.900 50.800L21.400 59.900L23.900 58.400L26.400 63.500L28.500 62.400L25.900 57.400L29 56.900z" fill="#a00810" stroke="#fff" stroke-width=".9"/>
<!-- move -->
<path d="M3 82.500L8 70.500L13 82c-2 2.500-8 2.500-10 .5z" fill="#c4c6ca"/>
<path d="M8.500 83L13.500 71L18.500 82.500c-2 2.500-8 2.500-10 .5z" fill="#aeb2ba"/>
<path d="M14.300 85.800L21.400 72.100L29 84.800c-1 7-13 8-14.700 1z" fill="url(#tsph)"/>
<path d="M2.600 85.800c5 3 10 6 14.700 8.600l1.500-3 3.100 7.100-9.700-1 1.700-2.500C9 92.500 5 89.500 2.600 85.800z" fill="url(#tarr)"/>
<!-- rotate -->
<path d="M3.500 122c0-3.500 2-6.500 5-8" fill="none" stroke="#f08888" stroke-width="3.200" opacity=".8"/>
<path d="M24.400 113c6 2 6.500 11 1 14l-1-2.800-10.600 5.200 11.600 3-1-2.800c9-3 9-16 1-18.500z" fill="#e01818"/>
<circle cx="16.300" cy="113.200" r="8.100" fill="url(#tsph)"/>
<!-- scale -->
<path d="M1.300 142L17 139.500l3.400 18.500L5 162.700z" fill="#b0b2bc" opacity=".75"/>
<path d="M7.200 143.200L19.700 140.800L22.800 155.700L11.500 158.800z" fill="#1880e8" stroke="#0a58b0" stroke-width=".8"/>
<path d="M7.200 143.200l-2 1.500 4 15.500 2.300-1.400z" fill="#0a58b0"/>
<path d="M22.500 144l3-2.500 3 7.500 2-1.500-1 9-7.500-4 2.200-1.200z" fill="#e01818"/>
<path d="M8.700 164.200l11-2.700-.6-2.200 7 1-5 5.500-.6-2.200-11.500 2.500z" fill="url(#tarr)"/>
<!-- manip -->
<path d="M34 170v34H0z" fill="#989498"/><path d="M0 203.500L33.500 170" stroke="#000" stroke-width="1.500"/>
<circle cx="8.700" cy="179.500" r="4" fill="url(#tsph)"/>
<path d="M23.600 195V187" stroke="#106010" stroke-width="1.600"/><path d="M23.600 181.200l-4 7.500h8z" fill="#28d028"/>
<path d="M22.800 194.800h-6" stroke="#101080" stroke-width="1.600"/><path d="M9 196.500l8-4v7.500z" fill="#1010e0"/>
<circle cx="27.500" cy="198.600" r="4" fill="#e01010"/><circle cx="22.800" cy="194.500" r="1.800" fill="#2090c0"/>
</svg>
<!-- LAYOUT BUTTONS -->

<style>.lb{position:absolute;left:3px;width:32px;height:32px;border:1px solid #000;background:#c8c5c8}</style>
<div class="lb" style="top:364px"></div><div class="lb" style="top:398px"></div><div class="lb" style="top:432px"></div><div class="lb" style="top:466px"></div><div class="lb" style="top:500px"></div><div class="lb" style="top:534px"></div>
<svg style="left:3px;top:364px" width="32" height="204" viewBox="0 0 32 204">
<defs><g id="grd"><path d="M0 5l10-5 12 4-11 7z M5 2.500l12 5M11 0l-5 8M16 2l-10 6" fill="none" stroke="#000" stroke-width=".9"/></g>
<g id="ax"><path d="M4 0v5" stroke="#20c020" stroke-width="1.400"/><path d="M4 5l-4 3" stroke="#1020e0" stroke-width="1.400"/><path d="M4 5l4 3" stroke="#e01010" stroke-width="1.400"/></g>
<g id="gph"><rect x="0" y="0" width="30" height="14" fill="#c8c5c8"/><rect x="1.500" y="2" width="4" height="11" fill="#fff"/><path d="M2.500 4h2M2.500 6.500h2" stroke="#e06020"/><path d="M2.500 9h2M2.500 11.500h2" stroke="#30b030"/><path d="M6 9.500h24" stroke="#000"/><path d="M11 1v13" stroke="#e01010" stroke-width="1.200"/><path d="M6 11C8 2 12 2 15 8s6 6 8 2 4-3 7-2" fill="none" stroke="#2040d0" stroke-width="1.200"/></g></defs>
<!-- 1 persp -->
<use href="#grd" x="5" y="7"/><use href="#ax" x="3" y="19"/>
<!-- 2 four -->
<g transform="translate(0,34)"><path d="M15.500 1v30M1 15.500h30" stroke="#000"/><path d="M8 3v10M3 8h10M8 18v10M3 23h10M23.500 18v10M18.500 23h10" stroke="#000" stroke-width="1.300"/><use href="#grd" transform="translate(18,4) scale(.5)"/><use href="#ax" transform="translate(16,9) scale(.6)"/></g>
<!-- 3 outliner/persp -->
<g transform="translate(0,68)"><rect x="1" y="1" width="14" height="30" fill="#fff"/><path d="M15.500 1v30" stroke="#000"/><path d="M3 4h7" stroke="#606060"/><path d="M5 7h4M5 9.500h5M5 12h6M5 14.500h4M5 17h5M5 19.500h4M5 22h4" stroke="#2040a0"/><path d="M3 7h1M3 9.500h1M3 12h1M3 14.500h1M3 17h1M3 19.500h1" stroke="#c0a020"/><use href="#grd" transform="translate(17.500,11) scale(.52)"/><use href="#ax" transform="translate(16,22) scale(.75)"/></g>
<!-- 4 persp/graph -->
<g transform="translate(0,102)"><path d="M1 15.500h30" stroke="#000"/><use href="#grd" transform="translate(3,2) scale(1.050,.95)"/><use href="#ax" transform="translate(1,8) scale(.6)"/><use href="#gph" x="1" y="17"/></g>
<!-- 5 hypergraph/persp -->
<g transform="translate(0,136)"><rect x="1" y="1" width="30" height="14" fill="#000"/><path d="M1 15.500h30" stroke="#000"/><g fill="none" stroke-width="1"><rect x="6" y="3" width="4" height="4" stroke="#4080ff"/><rect x="6" y="9" width="4" height="4" stroke="#4080ff"/><rect x="14" y="3" width="4" height="4" stroke="#ff8080"/><rect x="14" y="9" width="4" height="4" stroke="#ff8080"/><rect x="22" y="5.500" width="4.500" height="4.500" stroke="#60ff60"/><path d="M10 5h4M10 11h4M18 5l4 2M18 11l4-2" stroke="#c0c0c0"/></g><use href="#grd" transform="translate(3,18) scale(1.050,.95)"/><use href="#ax" transform="translate(1,24) scale(.6)"/></g>
<!-- 6 persp/dope/graph -->
<g transform="translate(0,170)"><path d="M1 15.500h30M15.500 1v14" stroke="#000"/><use href="#grd" transform="translate(2,4) scale(.55)"/><use href="#ax" transform="translate(1,9) scale(.6)"/><rect x="16" y="1" width="15" height="14" fill="#000"/><path d="M18 4h5" stroke="#f0e020" stroke-width="2"/><path d="M20 8h6M23 12h6" stroke="#b0b0b0" stroke-width="2"/><use href="#gph" x="1" y="17"/></g>
</svg>
<div class="a" style="left:3px;top:568px;width:32px;height:31px;border:2px solid;border-color:#fff #808080 #808080 #fff"></div>
<svg style="left:16px;top:581px" width="6" height="4"><path d="M0 0h5l-2.500 3z"/></svg>
<!-- VIEWPORT FRAME -->
<div class="a" style="left:38px;top:106px;width:1040px;height:835px;border:3px solid #0a246a;background:#d4d0c8"></div>
<div class="t vm" style="left:45.500px;letter-spacing:-.55px">View</div><div class="t vm" style="left:77px;letter-spacing:-.3px">Shading</div><div class="t vm" style="left:125.500px;letter-spacing:-.25px">Lighting</div><div class="t vm" style="left:172.500px;letter-spacing:-.35px">Show</div><div class="t vm" style="left:208px;letter-spacing:-.45px">Panels</div>
<style>.vm{top:113px;font-size:11px}</style>
<div class="a" style="left:41px;top:126px;width:1034px;height:812px;background:#a3a1a4;border-top:2px solid #6c6868;border-left:1px solid #808080"></div>
<svg style="left:41px;top:128px" width="1034" height="810" viewBox="41 128 1034 810">
<defs>
<clipPath id="vp"><rect x="41" y="128" width="1034" height="810"/></clipPath>
<linearGradient id="pants" x1="0" y1="0" x2="1" y2="0"><stop offset="0" stop-color="#282a18"/><stop offset=".45" stop-color="#3e4226"/><stop offset=".7" stop-color="#4c5030"/><stop offset="1" stop-color="#2a2c1a"/></linearGradient>
<linearGradient id="pants2" x1="0" y1="0" x2="1" y2="1"><stop offset="0" stop-color="#3c4026"/><stop offset="1" stop-color="#242818"/></linearGradient>
<linearGradient id="shirt" x1="0" y1="0" x2="1" y2="0"><stop offset="0" stop-color="#14161e"/><stop offset=".5" stop-color="#1e222e"/><stop offset="1" stop-color="#151820"/></linearGradient>
<linearGradient id="arm" x1="0" y1="0" x2="0" y2="1"><stop offset="0" stop-color="#c89068"/><stop offset="1" stop-color="#8a5a38"/></linearGradient>
<radialGradient id="skull" cx=".5" cy=".5" r=".5"><stop offset="0" stop-color="#7c766a"/><stop offset=".55" stop-color="#b0a89c"/><stop offset=".85" stop-color="#dcd4c8"/><stop offset="1" stop-color="#98897a"/></radialGradient>
<g id="star"><path d="M-1 0L2 -12L3.500 -1L13 7.500L1 3.500L-12 5.500z"/></g>
</defs>
<g clip-path="url(#vp)" shape-rendering="crispEdges">
<!-- ramp geometry -->
<path d="M229.500 297L259.300 311.300L410 840L470.500 938L395 938L256.900 681z" fill="#4a3232"/>
<path d="M229.500 297L598 283L668.600 294L259.300 311.300z" fill="#6b4746"/>
<path d="M259.300 311.300L668.600 294L908.300 733.200L410 840z" fill="#bb7b79"/>
<path d="M410 840L908.300 733.200L1075 833L1075 938L470.500 938z" fill="#6b4746"/>
<g fill="none" stroke="#66e6b8" stroke-width="1.250" shape-rendering="geometricPrecision">
<path d="M229.500 297L598 283L668.600 294L908.300 733.200L1075 833"/>
<path d="M229.500 297L256.900 681L395 938"/>
<path d="M229.500 297L259.300 311.300L410 840L470.500 938"/>
<path d="M259.300 311.300L668.600 294"/>
<path d="M410 840L908.300 733.200"/>
</g>
</g>
<g clip-path="url(#vp)">
<!-- cyan locators -->
<g fill="#60dcf4"><path d="M498.800 256.300L501.300 243L502 255.500L509 265.500L498.500 259L486 260.500z"/><path d="M512.500 271l2 8-4.500 0z"/><path d="M513 329.500l3 1.500-2 1z"/></g>
<circle cx="477.800" cy="301.400" r="2.800" fill="#e01018"/>
<!-- CHARACTER -->
<!-- back (left) leg -->
<path d="M516.600 357L512.300 379.400L506.700 386.400L496.200 406.100L499.700 413.100L526.400 423L536.300 396.300L528 372z" fill="url(#pants2)"/>
<path d="M499.700 413.100L512.300 418.800L518 424.400L515.200 438.500L513.800 448.300L508.100 453.900L498.300 452.500L492 446.900L493.400 430L496.900 418.800z" fill="#422618"/>
<path d="M499.700 413.100L512.300 418.800L518 424.400L517 430L498 423z" fill="#241408"/>
<path d="M492 443l6 5 10 1 5-3 0 3-5 5-10-1.500-6-5.500z" fill="#140a06"/>
<!-- left hand / forearm -->
<path d="M494.400 286.300L503.800 282.500L505 297.500L496.300 295z" fill="#6a625c"/>
<path d="M505 297.500L516.300 300L526.300 301.300L525.600 307.500L517.500 306.300L506.300 301.300z" fill="#c4bcae"/>
<path d="M506.300 301.300L517.500 306.300L525.600 307.500L525.900 305L517 303.500z" fill="#7a6c5c"/>
<!-- torso -->
<path d="M560 265L577.500 266.900L587.500 277.500L597.500 282.500L612.500 293.800L626.300 312.500L610 320L600 311.300L592.500 318.800L585 330L580 348L577 364L556 357.500L533.400 352L518 350.500L518.800 345L517.500 330L525 323.800L526.300 307.500L516.300 300L505 297.500L503.800 282.500L517.500 276.900L542.500 271.300z" fill="url(#shirt)"/>
<path d="M530 310l52 4-2 18-52-6z" fill="#262c3a" opacity=".3"/>
<!-- straps -->
<path d="M538.800 272.500L542.500 272.500L532.500 290L530 300L526.300 300L529.400 288.800z" fill="#7c5e38"/>
<path d="M530 297.500L560 282.500L585 278.800L586.300 282.500L561.300 287.500L532.500 302.500z" fill="#8c6c40"/>
<path d="M585.600 278.800L591.300 279.400L590.600 300L590 318.800L587.500 316.300L586.300 295z" fill="#7c5e38"/>
<!-- pouch -->
<path d="M517.500 328.800L525 326.300L525.600 343.800L518.800 345z" fill="#4c3c28"/>
<!-- neck / ear / face / hair -->
<path d="M580 263.800L586.300 270L592.500 276.300L587.500 277.500L577.500 267.500z" fill="#8a5c40"/>
<path d="M591.300 262.500L596.300 257.500L600 253.800L606.300 257.500L605 267.500L603.100 273.800L597.500 277.500L592.500 276.300L586.300 270z" fill="#b48462"/>
<path d="M591.300 262.500L586.300 270L592.500 276.300L597.500 277.500L594 270z" fill="#8a5c40"/>
<path d="M597 260l8 2-.3 1.600-7.700-2z" fill="#2a1810"/><path d="M599.500 263.500l4 1-.3 1.500-3.700-.8z" fill="#30201a"/><path d="M604.500 266l1.500 5-2.500 1z" fill="#c89874"/><path d="M597 273.500l5 1-3 2.500z" fill="#7a4c34"/>
<path d="M568.100 261.300L570 251.300L575 241.300L582.500 232.500L591.300 229L600 230.600L607.500 236.300L613.800 245L615 251.300L611.300 257.500L607.500 263.100L606.300 257.500L600 253.800L596.300 257.500L591.300 262.500L588.800 257.500L586.300 267.500L580 263.800L575 264.400z" fill="#2a1a12"/>
<path d="M582.500 256.300L589.500 257L592 262.500L587 271L581.300 266.300z" fill="#a07050"/>
<path d="M578 240l8-6 10-2 8 4-10 0-8 4z" fill="#4e3222"/>
<path d="M596 240l8 8-3 4z" fill="#3e281a"/><path d="M574 250l6-10 4 2-6 14z" fill="#3c2618"/><path d="M590 244l6 10-3 4-6-8z" fill="#1c100a"/>
<!-- right arm -->
<path d="M610 320L626.300 312.500L630 318.800L641.900 325.200L639.900 338.900L627.500 336.300L616.300 330z" fill="#dcd4c4"/>
<path d="M616.300 330L627.500 336.300L639.900 338.900L640.500 334.500L628 331.500L618 325z" fill="#a89c88"/>
<path d="M641.900 325.200L673.100 335L686.800 342.800L687.800 350.600L677 347.700L657.500 341.800L639.900 338.900z" fill="url(#arm)"/>
<!-- glaive in hand -->
<path d="M682 352.500c3 4.500 8 2 10-1.500l5-3-2-4-4 1-3 5-5-1z" fill="#6a1a92" stroke="#3c0858" stroke-width="1.200"/>
<!-- belt -->
<path d="M518 350.500L533.400 351.300L558.800 356.900L577 363.900L570 370.200L556 363.200L533.400 359L518 356.900z" fill="#8a6c44"/>
<path d="M524 351l4 .5-.5 6.500-4-.5z" fill="#b09a68"/>
<path d="M518 355l15.400 2 22.600 4.500 14 7" fill="none" stroke="#5a4428" stroke-width="1"/>
<!-- front (right) leg -->
<path d="M516.600 356.900L533.400 359L556 363.200L570 370.200L577 368.100L591.100 380.800L601 390.600L620.600 411.700L636.100 430L636.500 457.100L634.200 479.400L635.700 494.200L634.200 516.500L619.400 518L601.600 518.700L597.900 494.200L601.600 464.500L607.500 443.800L584.100 423L561.600 411.700L536.300 396.300L524 390L512.300 379.400z" fill="url(#pants)"/>
<path d="M516.600 356.900L533.400 359L548 362L546 382L536.300 396.300L524 390L512.300 379.400z" fill="#30361f" opacity=".85"/>
<path d="M524 365l16 3-2 10-15-4z" fill="#484c2e" opacity=".8"/>
<path d="M597 397l24 22-12 9-22-16z" fill="#4e5232" opacity=".75"/>
<path d="M596 396l26 23" stroke="#262c18" stroke-width="1.500" fill="none" opacity=".8"/>
<path d="M624 436l4 22-3 20 2 18" fill="none" stroke="#66693f" stroke-width="2" opacity=".75"/>
<path d="M618 440l-3 24 3 22-2 28" fill="none" stroke="#5a5e38" stroke-width="1.500" opacity=".7"/>
<path d="M611 447l-5 26 4 40" fill="none" stroke="#222816" stroke-width="2.500" opacity=".7"/>
<path d="M601.600 510L634.200 508L634.200 516.500L601.600 518.700z" fill="#20260f" opacity=".6"/>
<!-- right boot -->
<path d="M609 523.900L629.800 521L630.500 532.800L643.100 535.100L649.800 543.200L649.100 550.600L637.200 555.800L616.400 557.300L601.600 553.600L597.100 546.900L603.100 537.300L608.200 531.300z" fill="#3e2418"/>
<path d="M609 523.900L629.800 521L630.300 529L609 532z" fill="#1c0e08"/>
<path d="M597.100 546.900L603 549L618 552L638 550L649.800 544L649.100 550.600L637.200 555.800L616.400 557.300L601.600 553.600z" fill="#120806"/>
<!-- skull emblem -->
<circle cx="577.200" cy="386.400" r="16.500" fill="url(#skull)"/>
<circle cx="577.200" cy="386.400" r="15" fill="none" stroke="#f0ece4" stroke-width="1.200" stroke-dasharray="2 1.500" opacity=".8"/>
<g fill="#4c5238"><ellipse cx="580.500" cy="377.500" rx="3" ry="2.600"/><ellipse cx="570.500" cy="392" rx="3" ry="2.500"/><ellipse cx="577" cy="394.500" rx="2.800" ry="2.500"/><ellipse cx="584" cy="390" rx="3" ry="2.600"/><ellipse cx="585.500" cy="383" rx="2" ry="2"/></g>
<!-- rig markers -->
<g stroke="#000" stroke-width="1" fill="none" shape-rendering="crispEdges">
<path d="M494.5 289.5h13M500.5 283v13M528.5 279.5h13M534.5 273v13M528.5 300.5h13M534.5 294v13M545.5 298.5h13M551.5 292v13M567.5 299.5h13M573.5 293v13M575.5 261.5h13M581.5 255v13M596.5 294.5h13M602.5 288v13M618.5 327.5h13M624.5 321v13M674.5 334.5h13M680.5 328v13M543.5 356.5h13M549.5 350v13M540.5 368.5h13M546.5 362v13"/>
</g>
<g stroke="#501878" stroke-width="1" fill="none">
<path d="M624.300 308.600L684.800 337M671.500 313.500V335M610 240.600l3.100-4.300"/>
<path d="M571.400 416L591.100 459.600M522.200 392L510.200 420.200M517.300 424.400L527.100 423.700"/>
<path d="M655.300 517.200V540.200L675.800 537.300M631.300 529.100L641.700 528.400M643.100 535.800L655 540.200"/>
</g>
<path d="M613.500 233.500l2.200 2.500-2.200 2.500-2.200-2.500z" fill="#4818a0"/>
<circle cx="655.300" cy="540" r="2" fill="#501878"/>
<path d="M685 333l7 6M692 333l-7 6" stroke="#208060" stroke-width="1"/>
<g fill="#f4c8a0" stroke="#e8b890" stroke-width=".6">
<path d="M567.900 418.100L568.600 405.400L570.500 416.500L577 427.200L567.500 420.500L552.400 423.700z"/>
<path d="M591.800 465.200L593.200 453.900L594.500 463.500L601 479.200L591.500 467.800L575.600 473.600z"/>
<path d="M616.400 521L617.900 507.600L619 519.500L627.500 532.800L616 523.800L600.800 526.900z"/>
</g>
</g>
</svg>
<!-- RIGHT PANEL -->
<svg style="left:1081px;top:107px" width="8" height="8"><path d="M.5 0v7l4-3.500z" fill="#606060"/></svg>

<!-- channel box icons -->
<div class="a" style="left:1126px;top:115px;width:23px;height:23px;background:#d8d5ce;border:1px solid;border-color:#808080 #fff #fff #808080"></div>
<svg style="left:1084px;top:117px" width="66" height="20" viewBox="0 0 66 20" shape-rendering="crispEdges">
<rect x="9" y="2" width="7" height="13" fill="#fff"/><path d="M0 3.500h7M0 7.500h7M0 11.500h7M0 15.500h7M9 3.500h7M9 7.500h7M9 11.500h7" stroke="#000" fill="none"/><path d="M8.500 2v14" stroke="#000" stroke-width="1.400"/>
<g transform="translate(23,0)"><path d="M8 4.500h6M8 9.500h6M8 14.500h6" stroke="#000"/><rect x="0" y="4" width="1.500" height="1.500"/><rect x="0" y="9" width="1.500" height="1.500"/><rect x="0" y="14" width="1.500" height="1.500"/><rect x="3" y="2.500" width="3.500" height="3.500" fill="#30e0c0" stroke="#000" stroke-width=".8"/><rect x="3" y="7.500" width="3.500" height="3.500" fill="#c03090" stroke="#000" stroke-width=".8"/><rect x="3" y="12.500" width="3.500" height="3.500" fill="#f0f060" stroke="#000" stroke-width=".8"/></g>
<g transform="translate(46,0)"><rect x="9" y="2" width="7" height="7" fill="#fff"/><path d="M1 3.500h7M1 6.500h7M9 3.500h7M9 6.500h7M0 9.500h16M10 13.500h5" stroke="#000"/><path d="M8.500 1v9" stroke="#000" stroke-width="1.400"/><rect x="1.500" y="13" width="1.500" height="1.500"/><rect x="4.500" y="11.500" width="3.500" height="3.500" fill="#30e0c0" stroke="#000" stroke-width=".8"/></g>
</svg>
<div class="btn" style="left:1213px;top:115px;width:22px;height:23px"></div>
<div class="btn" style="left:1235px;top:115px;width:22px;height:23px"></div>
<div class="btn" style="left:1257px;top:115px;width:22px;height:23px"></div>
<svg style="left:1214px;top:116px" width="64" height="20" viewBox="0 0 64 20"><path d="M11 13V5" stroke="#20a020" stroke-width="1.600"/><path d="M11 1l-2.500 5h5z" fill="#20d020"/><path d="M11 13H5" stroke="#1010c0" stroke-width="1.600"/><path d="M2 13l5-3v6z" fill="#1010e0"/><circle cx="14" cy="15" r="2.800" fill="#e01010"/><circle cx="10.500" cy="12.500" r="1.500" fill="#fff" stroke="#000" stroke-width=".6"/>
<g transform="translate(22,0)"><circle cx="10" cy="10" r="7" fill="none" stroke="#808080" stroke-width="1.600"/><path d="M10 3a7 7 0 0 0 0 14c3-3 3-11 0-14z" fill="#808080"/></g>
<g transform="translate(44,0)"><path d="M4 17L15 5" stroke="#808080" stroke-width="2"/><path d="M17 2l-7 2 5 5z" fill="#808080"/></g></svg>
<!-- channel box frame -->
<div class="a" style="left:1081px;top:140px;width:197px;height:364px;border:1px solid;border-color:#404040 #fff #fff #404040;box-shadow:inset 1px 1px 0 #808080"></div>
<div class="t" style="left:1086px;top:145px;font-size:11px;letter-spacing:-.35px">Channels</div><div class="t" style="left:1140px;top:145px;font-size:11px;letter-spacing:-.1px">Object</div>
<div class="hl" style="left:1083px;top:159px;width:194px"></div>
<div class="a" style="left:1084px;top:162px;width:174px;height:17px;background:#cbcbcb"></div>
<div class="a" style="left:1084px;top:355px;width:174px;height:16px;background:#cbcbcb"></div>
<div class="a" style="left:1084px;top:339px;width:174px;height:1px;background:#606060"></div>
<div class="a" style="left:1084px;top:371px;width:174px;height:1px;background:#606060"></div>
<div class="a" style="left:1083px;top:161px;width:1px;height:341px;background:#808080"></div>
<div class="a" style="left:1084px;top:161px;width:175px;height:1px;background:#808080"></div>
<div class="tb cb" style="left:1086px;top:164px">pCube1</div>
<style>.cb{font-size:11.500px;letter-spacing:.1px}.cl{position:absolute;right:91px;white-space:nowrap;line-height:13px;font-size:11px}.cf{position:absolute;left:1193px;width:66px;height:17px;background:#fff;border:1px solid #8c8c8c;font-size:11px;line-height:14px;padding-left:2px}</style>
<div class="cl" style="top:180px">Translate X</div><div class="cl" style="top:196px">Translate Y</div><div class="cl" style="top:212px">Translate Z</div><div class="cl" style="top:228px">Rotate X</div><div class="cl" style="top:244px">Rotate Y</div><div class="cl" style="top:260px">Rotate Z</div><div class="cl" style="top:276px">Scale X</div><div class="cl" style="top:292px">Scale Y</div><div class="cl" style="top:308px">Scale Z</div><div class="cl" style="top:324px">Visibility</div>
<div class="cf" style="top:179px">0</div><div class="cf" style="top:195px">-5.094</div><div class="cf" style="top:211px">-5.11</div><div class="cf" style="top:227px">0</div><div class="cf" style="top:243px">0</div><div class="cf" style="top:259px">0</div><div class="cf" style="top:275px">1</div><div class="cf" style="top:291px">1</div><div class="cf" style="top:307px">1</div><div class="cf" style="top:323px">on</div>
<div class="tb cb" style="left:1086px;top:341px;font-size:10.500px">SHAPES</div>
<div class="tb cb" style="left:1095px;top:356px">pCubeShape1</div>
<div class="tb cb" style="left:1086px;top:373px;font-size:10.500px">INPUTS</div>
<div class="tb cb" style="left:1095px;top:388px">Floor</div>
<div class="tb cb" style="left:1095px;top:404px">deleteComponent15</div><div class="tb cb" style="left:1095px;top:420px">deleteComponent14</div><div class="tb cb" style="left:1095px;top:436px">deleteComponent13</div><div class="tb cb" style="left:1095px;top:452px">deleteComponent12</div><div class="tb cb" style="left:1095px;top:468px">deleteComponent11</div><div class="tb cb" style="left:1095px;top:484px">deleteComponent10</div>
<!-- scrollbar -->
<style>.trk{position:absolute;background:#eae8e4;background-image:conic-gradient(#d4d0c8 25%,#fff 0 50%,#d4d0c8 0 75%,#fff 0);background-size:2px 2px}</style>
<div class="trk" style="left:1259px;top:163px;width:16px;height:337px"></div>
<div class="btn" style="left:1259px;top:163px;width:16px;height:16px"></div>
<div class="btn" style="left:1259px;top:179px;width:16px;height:172px"></div>
<div class="btn" style="left:1259px;top:484px;width:16px;height:16px"></div>
<svg style="left:1263px;top:169px" width="8" height="325"><path d="M0 4h7l-3.500-4z"/><path d="M0 321h7l-3.500 4z"/></svg>
<!-- LAYER EDITOR -->
<div class="a" style="left:1081px;top:509px;width:197px;height:313px;border:1px solid;border-color:#404040 #fff #fff #404040;box-shadow:inset 1px 1px 0 #808080"></div>
<div class="t" style="left:1086px;top:514px;font-size:11px;letter-spacing:-.3px">Layers</div><div class="t" style="left:1128px;top:514px;font-size:11px;letter-spacing:-.1px">Options</div>
<div class="hl" style="left:1083px;top:528px;width:194px"></div>
<div class="fld" style="left:1084px;top:531px;width:62px;height:22px"></div>
<div class="t" style="left:1089px;top:536px;font-size:11px;letter-spacing:-.35px">Display</div>
<div class="btn" style="left:1130px;top:533px;width:14px;height:18px"></div>
<svg style="left:1133px;top:540px" width="8" height="4"><path d="M0 0h7l-3.500 4z"/></svg>
<div class="btn" style="left:1252px;top:530px;width:25px;height:25px"></div>
<svg style="left:1255px;top:533px" width="20" height="20" viewBox="0 0 20 20"><path d="M2 5l10-3 6 3-9 4z" fill="#d4d0c8" stroke="#000"/><path d="M3 9l9-3 6 3-9 4z" fill="#fff" stroke="#000"/><path d="M3 14l9-3 5 3-8 4z" fill="#a0a098" stroke="#000"/></svg>
<div class="a" style="left:1083px;top:558px;width:193px;height:262px;border:1px solid;border-color:#404040 #fff #fff #404040;border-top:2px solid #606060"></div>
<style>.lx{position:absolute;width:16px;height:16px;border:1px solid;border-color:#fff #a0a0a0 #a0a0a0 #fff;outline:1px solid #b8b4ac;outline-offset:-2px;font-size:11.500px;line-height:14px;text-align:center}.ln{position:absolute;left:1145px;white-space:nowrap;font-size:11px;line-height:13px;letter-spacing:-.15px}</style>
<div class="lx" style="left:1087px;top:561px">V</div><div class="lx" style="left:1107px;top:561px"></div><div class="lx" style="left:1127px;top:561px"></div>
<div class="lx" style="left:1087px;top:581px">V</div><div class="lx" style="left:1107px;top:581px"></div><div class="lx" style="left:1127px;top:581px"></div>
<div class="lx" style="left:1087px;top:601px"></div><div class="lx" style="left:1107px;top:601px"></div><div class="lx" style="left:1127px;top:601px"></div>
<div class="lx" style="left:1087px;top:621px">V</div><div class="lx" style="left:1107px;top:621px"></div><div class="lx" style="left:1127px;top:621px"></div>
<svg style="left:1127px;top:561px" width="16" height="76"><path d="M2 14L14 2M2 34L14 22M2 54L14 42M2 74L14 62" stroke="#606060" stroke-width=".9"/></svg>
<div class="ln" style="top:563px">layer1</div><div class="ln" style="top:583px">glave:Chatka_Hip</div><div class="ln" style="top:603px">glave:Chakta_Holster</div><div class="ln" style="top:623px">Floor</div>
<div class="trk" style="left:1259px;top:560px;width:16px;height:258px"></div>
<div class="btn" style="left:1259px;top:560px;width:16px;height:15px"></div>
<div class="btn" style="left:1259px;top:575px;width:16px;height:162px"></div>
<div class="btn" style="left:1259px;top:803px;width:16px;height:15px"></div>
<svg style="left:1263px;top:565px" width="8" height="248"><path d="M0 4h7l-3.500-4z"/><path d="M0 243h7l-3.500 4z"/></svg>
<div class="btn" style="left:1080px;top:824px;width:99px;height:13px"></div>
<div class="btn" style="left:1180px;top:824px;width:99px;height:13px"></div>
<div class="t" style="left:1124px;top:824px;font-size:11px;line-height:12px;letter-spacing:-1px">&lt;&lt;</div>
<div class="t" style="left:1224px;top:824px;font-size:11px;line-height:12px;letter-spacing:-1px">&gt;&gt;</div>
<div class="hl" style="left:1080px;top:840px;width:200px"></div>
<!-- TITAN -->
<div class="btn" style="left:1080px;top:844px;width:15px;height:15px"></div>
<svg style="left:1084px;top:850px" width="8" height="4"><path d="M0 0h7l-3.500 4z"/></svg>
<div class="tb" style="left:1099px;top:845px;font-size:12px">Titan</div>
<div class="btn" style="left:1080px;top:862px;width:48px;height:23px"></div>
<div class="btn" style="left:1129px;top:862px;width:49px;height:23px"></div>
<div class="a" style="left:1094px;top:865px;width:20px;height:18px;background:#c8c5c8"></div><svg style="left:1093px;top:864px" width="22" height="20" viewBox="0 0 22 20"><path d="M2 0v18h19" fill="none" stroke="#e04010" stroke-width="1.600"/><path d="M6 15c-1-7 5-4 8-7s2-5 5-6" fill="none" stroke="#1010d0" stroke-width="2.200"/></svg>
<div class="a" style="left:1140px;top:865px;width:27px;height:18px;background:#c8c5c8"></div>
<div class="a" style="left:1145px;top:866px;width:2px;height:16px;background:#d01010"></div><div class="a" style="left:1160px;top:866px;width:2px;height:16px;background:#d01010"></div>
<div class="sunk2" style="left:1180px;top:863px;width:97px;height:21px;background:#d4d0c8"></div>
<div class="t" style="left:1183px;top:867px;font-size:11px;color:#909090">1.0000</div>
<div class="fld" style="left:1081px;top:887px;width:97px;height:21px"></div><div class="t" style="left:1084px;top:891px;font-size:11px">0.0000</div>
<div class="fld" style="left:1180px;top:887px;width:97px;height:21px"></div><div class="t" style="left:1183px;top:891px;font-size:11px">1.0000</div>
<div class="btn" style="left:1080px;top:910px;width:39px;height:26px"></div>
<div class="btn" style="left:1119px;top:910px;width:40px;height:26px"></div>
<div class="btn" style="left:1159px;top:910px;width:120px;height:26px"></div>
<svg style="left:1091px;top:914px" width="20" height="19" viewBox="0 0 20 19"><path d="M7 10v8M10.500 7v11M14 5v13M17.500 5v13" stroke="#d01010" stroke-width="1.200"/><path d="M8.560 5.430L6.860 3.730A2.700 2.700 0 1 0 3.730 6.860L5.430 8.560" fill="none" stroke="#d80818" stroke-width="2.100" stroke-linejoin="round"/><path d="M9 5.870l-1.200-1.200M5.870 9l-1.200-1.200" stroke="#200000" stroke-width="2.100"/></svg>
<div class="a" style="left:1129px;top:914px;width:20px;height:19px;background:#c8c5c8"></div>
<svg style="left:1134px;top:915px" width="12" height="17"><path d="M1 1l9 7.500-9 7.500z" fill="#f0f010" stroke="#000" stroke-width="1.200"/></svg>
<div class="t" style="left:1206px;top:916px;font-size:12px;letter-spacing:2.500px">GO!</div>
<!-- TIME SLIDER -->
<div class="hl" style="left:0;top:940px;width:1280px;border-top-color:#d4d0c8"></div>
<svg style="left:3px;top:943px" width="9" height="72"><path d="M.5 0h7l-3.500 4zM.5 31h7l-3.500 4zM.5 57h7l-3.500 4z" fill="#606060"/></svg>

<div class="a" style="left:11px;top:943px;width:970px;height:30px;background:#d6d2ca;border:1px solid;border-color:#808080 #fff #fff #808080"></div>
<div class="a" style="left:224px;top:944px;width:25px;height:28px;background:#2a3038"></div>
<div class="a" style="left:43px;top:960px;width:2px;height:12px;background:#000"></div><div class="a" style="left:95px;top:960px;width:2px;height:12px;background:#000"></div><div class="a" style="left:147px;top:960px;width:2px;height:12px;background:#000"></div><div class="a" style="left:198px;top:960px;width:2px;height:12px;background:#000"></div><div class="a" style="left:250px;top:960px;width:2px;height:12px;background:#000"></div><div class="a" style="left:302px;top:960px;width:2px;height:12px;background:#000"></div><div class="a" style="left:354px;top:960px;width:2px;height:12px;background:#000"></div><div class="a" style="left:406px;top:960px;width:2px;height:12px;background:#000"></div><div class="a" style="left:457px;top:960px;width:2px;height:12px;background:#000"></div><div class="a" style="left:509px;top:960px;width:2px;height:12px;background:#000"></div><div class="a" style="left:561px;top:960px;width:2px;height:12px;background:#000"></div><div class="a" style="left:613px;top:960px;width:2px;height:12px;background:#000"></div><div class="a" style="left:665px;top:960px;width:2px;height:12px;background:#000"></div><div class="a" style="left:716px;top:960px;width:2px;height:12px;background:#000"></div><div class="a" style="left:768px;top:960px;width:2px;height:12px;background:#000"></div><div class="a" style="left:820px;top:960px;width:2px;height:12px;background:#000"></div><div class="a" style="left:872px;top:960px;width:2px;height:12px;background:#000"></div><div class="a" style="left:924px;top:960px;width:2px;height:12px;background:#000"></div><div class="a" style="left:975px;top:960px;width:2px;height:12px;background:#000"></div><div class="tb" style="left:47px;top:947px;font-size:12px">2</div><div class="tb" style="left:99px;top:947px;font-size:12px">4</div><div class="tb" style="left:151px;top:947px;font-size:12px">6</div><div class="tb" style="left:202px;top:947px;font-size:12px">8</div><div class="tb" style="left:254px;top:947px;font-size:12px">10</div><div class="tb" style="left:306px;top:947px;font-size:12px">12</div><div class="tb" style="left:358px;top:947px;font-size:12px">14</div><div class="tb" style="left:410px;top:947px;font-size:12px">16</div><div class="tb" style="left:461px;top:947px;font-size:12px">18</div><div class="tb" style="left:513px;top:947px;font-size:12px">20</div><div class="tb" style="left:565px;top:947px;font-size:12px">22</div><div class="tb" style="left:617px;top:947px;font-size:12px">24</div><div class="tb" style="left:669px;top:947px;font-size:12px">26</div><div class="tb" style="left:720px;top:947px;font-size:12px">28</div><div class="tb" style="left:772px;top:947px;font-size:12px">30</div><div class="tb" style="left:824px;top:947px;font-size:12px">32</div><div class="tb" style="left:876px;top:947px;font-size:12px">34</div><div class="tb" style="left:928px;top:947px;font-size:12px">36</div>
<div class="a" style="left:249px;top:960px;width:1px;height:12px;background:#fff"></div>
<div class="tb" style="left:229px;top:958px;font-size:11.500px;color:#fff">9</div>
<div class="fld" style="left:985px;top:948px;width:67px;height:20px"></div><div class="t" style="left:988px;top:951px;font-size:11px">9.00</div>
<style>.pb{position:absolute;top:945px;width:26px;height:25px;border:1px solid;border-color:#fff #808080 #808080 #fff}</style>
<div class="pb" style="left:1056px"></div><div class="pb" style="left:1084px"></div><div class="pb" style="left:1112px"></div><div class="pb" style="left:1140px"></div><div class="pb" style="left:1168px"></div><div class="pb" style="left:1196px"></div><div class="pb" style="left:1224px"></div><div class="pb" style="left:1252px"></div>
<svg style="left:1056px;top:945px" width="224" height="25" viewBox="0 0 224 25" fill="#7a7a7a">
<path d="M6 9v7h1.500V9zM12 12.500l5-3.500v7zM18 12.500l5-3.500v7zM7.500 12.500l5-3.500v7z"/>
<g transform="translate(28,0)"><path d="M6 6h2.500v13H6z"/><path d="M9 12.500l10-6.500v13z"/></g>
<g transform="translate(56,0)"><path d="M6 4h1.600v17H6z" fill="#a01010"/><path d="M9 12.500l10-6.500v13z"/></g>
<g transform="translate(84,0)"><path d="M5 12.500l13-7.500v15z"/></g>
<g transform="translate(112,0)"><path d="M21 12.500L7 4v17z" fill="#5c5c5c"/></g>
<g transform="translate(140,0)"><path d="M18.500 4h1.600v17h-1.600z" fill="#a01010"/><path d="M17 12.500L6 6v13z"/></g>
<g transform="translate(168,0)"><path d="M17 6h2.500v13H17z"/><path d="M17 12.500L6 6v13z"/></g>
<g transform="translate(196,0)"><path d="M18 9v7h-1.500V9zM12 12.500L7 9v7zM6 12.500L1 9v7zM17 12.500L12 9v7z" transform="translate(3,0)"/></g>
</svg>
<!-- RANGE SLIDER -->
<div class="fld" style="left:12px;top:976px;width:65px;height:22px"></div><div class="t" style="left:14px;top:979px;font-size:11px">-5.00</div>
<div class="fld" style="left:81px;top:976px;width:66px;height:22px"></div><div class="t" style="left:84px;top:979px;font-size:11px">1.00</div>
<div class="a" style="left:149px;top:976px;width:812px;height:21px;background:#a8a49c;border-top:1px solid #808080;border-left:1px solid #808080"></div>
<div class="a" style="left:237px;top:977px;width:525px;height:20px;background:#d4d0c8;border:1px solid;border-color:#fff #808080 #808080 #fff"></div>
<div class="a" style="left:242px;top:981px;width:10px;height:11px;border:1px solid;border-color:#fff #909090 #909090 #fff;background:#d4d0c8;outline:1px solid #b0aca4"></div>
<div class="a" style="left:747px;top:981px;width:10px;height:11px;border:1px solid;border-color:#fff #909090 #909090 #fff;background:#d4d0c8;outline:1px solid #b0aca4"></div>
<div class="t" style="left:257px;top:980px;font-size:11.500px;color:#fff">1</div>
<div class="t" style="left:729px;top:980px;font-size:11.500px;color:#fff">37</div>
<div class="fld" style="left:963px;top:976px;width:67px;height:22px"></div><div class="t" style="left:966px;top:979px;font-size:11px">37.00</div>
<div class="fld" style="left:1033px;top:976px;width:67px;height:22px"></div><div class="t" style="left:1036px;top:979px;font-size:11px">51.00</div>
<div class="btn" style="left:1102px;top:976px;width:23px;height:22px"></div>
<svg style="left:1105px;top:983px" width="18" height="10"><path d="M0 0h17l-8.500 9z"/></svg>
<div class="sunk2" style="left:1127px;top:976px;width:100px;height:22px;background:#d4d0c8"></div>
<div class="t" style="left:1131px;top:979px;font-size:11px;letter-spacing:-.2px">No Character Set</div>
<div class="a" style="left:1233px;top:978px;width:23px;height:17px;background:#c01010"></div>
<svg style="left:1235px;top:980px" width="20" height="13" viewBox="0 0 20 13"><path d="M1 5.500h11M2.500 5.500v4M5.500 5.500v4" stroke="#fff" stroke-width="2.400"/><ellipse cx="15" cy="6.500" rx="3" ry="4.500" fill="none" stroke="#fff" stroke-width="2"/></svg>
<div class="btn" style="left:1259px;top:976px;width:21px;height:21px"></div>
<svg style="left:1262px;top:980px" width="15" height="13" viewBox="0 0 15 13"><rect x=".7" y=".7" width="13.600" height="11.600" fill="#fff" stroke="#000" stroke-width="1.400"/><ellipse cx="7" cy="6" rx="4.500" ry="2.500" fill="none" stroke="#000"/><ellipse cx="9" cy="7.500" rx="3.500" ry="2" fill="none" stroke="#000"/></svg>
<!-- COMMAND LINE -->
<div class="fld" style="left:11px;top:1001px;width:500px;height:21px"></div>
<div class="a" style="left:517px;top:1001px;width:740px;height:21px;background:#909cb0;border:1px solid;border-color:#404040 #fff #fff #404040"></div>
<div class="btn" style="left:1259px;top:1000px;width:21px;height:22px"></div>
<svg style="left:1262px;top:1005px" width="15" height="12" viewBox="0 0 15 12"><rect x=".7" y=".7" width="13.600" height="10.600" fill="#fff" stroke="#000" stroke-width="1.400"/><path d="M1 5.500h13" stroke="#000" stroke-width="1.400"/></svg>
</body></html>
